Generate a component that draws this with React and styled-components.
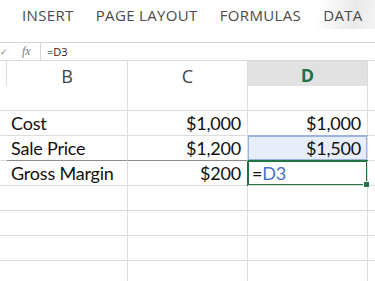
import React from 'react'
import styled, { createGlobalStyle } from 'styled-components'

const GlobalStyle = createGlobalStyle`
  html, body {
    margin: 0;
    padding: 0;
    background: #ffffff;
    overflow: hidden;
  }
`

const Frame = styled.div`
  width: 375px;
  height: 281px;
  overflow: hidden;
  background: #ffffff;
  font-family: "Open Sans", "Noto Sans", sans-serif;
`

const Ribbon = styled.div`
  height: 29px;
  display: flex;
  align-items: center;
  gap: 22px;
  padding-left: 22px;
  background: linear-gradient(100deg, #ffffff 0%, #ffffff 84%, #e9e9e9 94%, #f4f4f4 100%);
`

const Tab = styled.span`
  font-size: 15px;
  color: #4a4a4a;
  letter-spacing: 0.35px;
  white-space: nowrap;
`

const FormulaBar = styled.div`
  margin-top: 13px;
  height: 17px;
  border-top: 1px solid #d6d6d6;
  display: flex;
  align-items: stretch;
`

const Controls = styled.div`
  width: 40px;
  display: flex;
  align-items: center;
  gap: 14px;
  color: #8a8a8a;
  font-size: 9px;
`

const Fx = styled.span`
  font-family: "Liberation Serif", serif;
  font-style: italic;
  font-size: 12px;
  color: #7a7a7a;
`

const Formula = styled.div`
  flex: 1;
  border-left: 1px solid #d6d6d6;
  padding-left: 6px;
  display: flex;
  align-items: center;
  font-size: 11px;
  color: #222222;
`

const Sheet = styled.div`
  display: grid;
  grid-template-columns: 7px 121px 120px 120px 40px;
  grid-auto-rows: 25px;
  border-top: 1px solid #dadada;
  font-family: "Lato", "Open Sans", sans-serif;
`

const Head = styled.div`
  height: 30px;
  box-sizing: border-box;
  border-right: 1px solid #dadada;
  border-bottom: ${p => (p.$active ? '2px solid #217346' : '1px solid #c8c8c8')};
  background: ${p => (p.$active ? '#e1e1e1' : '#ffffff')};
  color: ${p => (p.$active ? '#217346' : '#444444')};
  font-family: "Open Sans", sans-serif;
  font-weight: ${p => (p.$active ? 700 : 400)};
  font-size: 18px;
  display: flex;
  align-items: center;
  justify-content: center;
`

const Cell = styled.div`
  box-sizing: border-box;
  border-right: 1px solid #dcdcdc;
  border-bottom: 1px solid ${p => (p.$rule ? '#8c8c8c' : '#dcdcdc')};
  background: ${p => (p.$range ? '#e8eef9' : '#ffffff')};
  box-shadow: ${p =>
    p.$range ? 'inset 0 0 0 1px #9db3df, 0 -1px 0 #9db3df' : p.$active ? 'inset 0 0 0 1px #217346, 0 -1px 0 #217346, -1px 0 0 #217346' : 'none'};
  position: ${p => (p.$active ? 'relative' : 'static')};
  display: flex;
  align-items: center;
  justify-content: ${p => (p.$right ? 'flex-end' : 'flex-start')};
  padding: 0 6px 0 4px;
  font-size: 18px;
  letter-spacing: -0.2px;
  color: #111111;
  white-space: nowrap;
`

const Handle = styled.span`
  position: absolute;
  right: -3px;
  bottom: -3px;
  width: 5px;
  height: 5px;
  background: #217346;
  border: 1px solid #ffffff;
`

const Ref = styled.span`
  color: #4472c4;
`

const rows = [
  { b: '', c: '', d: '' },
  { b: 'Cost', c: '$1,000', d: '$1,000' },
  { b: 'Sale Price', c: '$1,200', d: '$1,500', rule: true, range: true },
  { b: 'Gross Margin', c: '$200', active: true },
  {}, {}, {}, {},
]

export default function App() {
  return (
    <Frame>
      <GlobalStyle />
      <Ribbon>
        <Tab>INSERT</Tab>
        <Tab>PAGE LAYOUT</Tab>
        <Tab>FORMULAS</Tab>
        <Tab>DATA</Tab>
      </Ribbon>
      <FormulaBar>
        <Controls>
          <span>✓</span>
          <Fx>fx</Fx>
        </Controls>
        <Formula>=D3</Formula>
      </FormulaBar>
      <Sheet>
        <Head />
        <Head>B</Head>
        <Head>C</Head>
        <Head $active>D</Head>
        <Head />
        {rows.map((r, i) => (
          <React.Fragment key={i}>
            <Cell />
            <Cell $rule={r.rule}>{r.b}</Cell>
            <Cell $rule={r.rule} $right>{r.c}</Cell>
            {r.active ? (
              <Cell $active>
                =<Ref>D3</Ref>
                <Handle />
              </Cell>
            ) : (
              <Cell $range={r.range} $right>{r.d}</Cell>
            )}
            <Cell />
          </React.Fragment>
        ))}
      </Sheet>
    </Frame>
  )
}
